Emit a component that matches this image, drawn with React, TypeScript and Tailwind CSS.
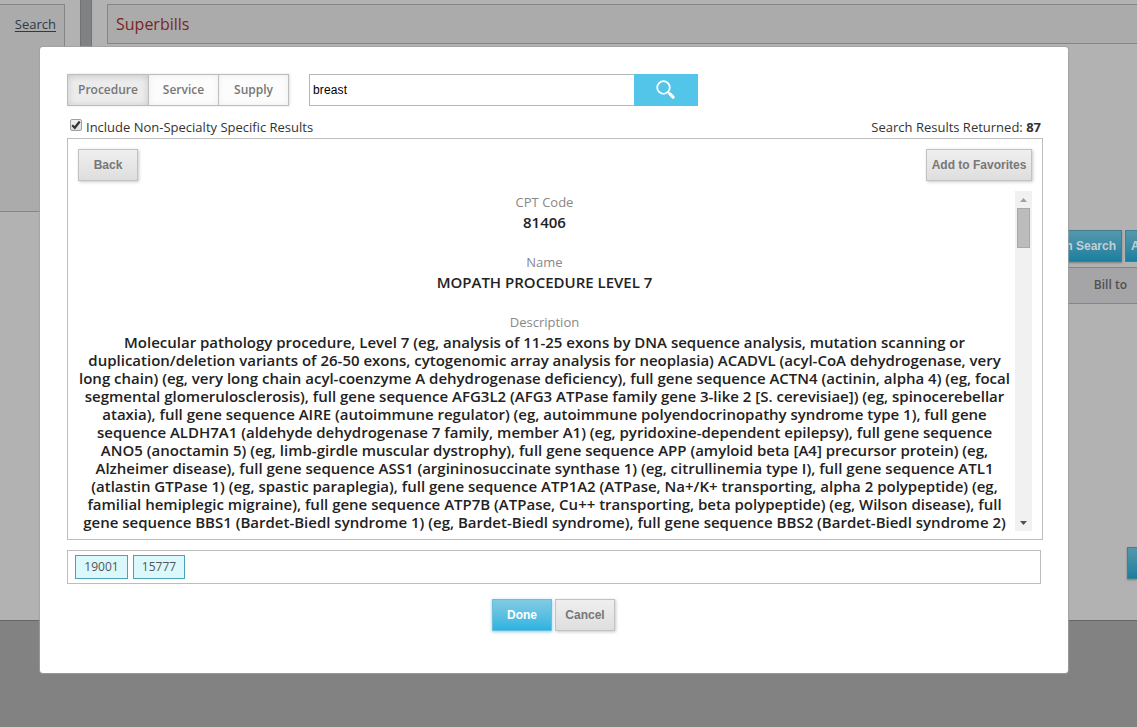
import React from "react";

const description = [
  "Molecular pathology procedure, Level 7 (eg, analysis of 11-25 exons by DNA sequence analysis, mutation scanning or",
  "duplication/deletion variants of 26-50 exons, cytogenomic array analysis for neoplasia) ACADVL (acyl-CoA dehydrogenase, very",
  "long chain) (eg, very long chain acyl-coenzyme A dehydrogenase deficiency), full gene sequence ACTN4 (actinin, alpha 4) (eg, focal",
  "segmental glomerulosclerosis), full gene sequence AFG3L2 (AFG3 ATPase family gene 3-like 2 [S. cerevisiae]) (eg, spinocerebellar",
  "ataxia), full gene sequence AIRE (autoimmune regulator) (eg, autoimmune polyendocrinopathy syndrome type 1), full gene",
  "sequence ALDH7A1 (aldehyde dehydrogenase 7 family, member A1) (eg, pyridoxine-dependent epilepsy), full gene sequence",
  "ANO5 (anoctamin 5) (eg, limb-girdle muscular dystrophy), full gene sequence APP (amyloid beta [A4] precursor protein) (eg,",
  "Alzheimer disease), full gene sequence ASS1 (argininosuccinate synthase 1) (eg, citrullinemia type I), full gene sequence ATL1",
  "(atlastin GTPase 1) (eg, spastic paraplegia), full gene sequence ATP1A2 (ATPase, Na+/K+ transporting, alpha 2 polypeptide) (eg,",
  "familial hemiplegic migraine), full gene sequence ATP7B (ATPase, Cu++ transporting, beta polypeptide) (eg, Wilson disease), full",
  "gene sequence BBS1 (Bardet-Biedl syndrome 1) (eg, Bardet-Biedl syndrome), full gene sequence BBS2 (Bardet-Biedl syndrome 2)",
];

const greyButton =
  "flex h-8 items-center justify-center border border-[#c2c2c2] bg-linear-to-b from-[#efefef] to-[#dedede] font-['Liberation_Sans',sans-serif] text-[12px] font-bold text-[#777] shadow-[1px_1px_3px_rgba(0,0,0,0.22)]";

function Backdrop() {
  return (
    <div className="flex h-full flex-col bg-[#828283]">
      <div className="flex h-[621px] border-b border-[#666] bg-[#b2b2b2]">
        <aside className="w-20 pt-1">
          <div className="flex h-[208px] w-[65px] justify-end border-y border-r border-[#858585] bg-[#ababab] pt-[10px] pr-2 text-[13px] leading-[18px] text-[#2b3b48]">
            <a className="underline underline-offset-2">Search</a>
          </div>
        </aside>
        <div className="w-3 border-x border-[#727375] bg-[#808183]" />
        <main className="flex min-w-0 flex-1 flex-col pt-1">
          <h1 className="ml-[15px] flex h-10 items-center border-y border-l border-[#858585] bg-[#ababab] pl-2 text-base text-[#7c2422]">
            Superbills
          </h1>
          <div className="mt-[186px] flex h-8 justify-end gap-[3px] font-['Liberation_Sans',sans-serif] text-[12px] font-bold text-[#c3cfd4]">
            <div className="flex h-8 w-[110px] items-center justify-end border border-[#437e91] bg-linear-to-b from-[#5497ac] to-[#187f9f] pr-[5px] whitespace-nowrap shadow-[0_1px_2px_rgba(0,0,0,0.3)]">
              Problem Search
            </div>
            <div className="flex h-8 w-3 items-center overflow-hidden border-y border-l border-[#437e91] bg-linear-to-b from-[#5497ac] to-[#187f9f] pl-[5px]">
              A
            </div>
          </div>
          <div className="mt-[5px] flex h-[37px] items-center justify-end border-y border-[#858585] bg-[#a5a5a7] pr-[10px] pb-px text-[12px] font-semibold text-[#505050]">
            Bill to
          </div>
          <div className="mt-[243px] h-8 w-[10px] self-end border border-r-0 border-[#437e91] bg-linear-to-b from-[#5497ac] to-[#187f9f] shadow-[0_1px_2px_rgba(0,0,0,0.3)]" />
        </main>
      </div>
    </div>
  );
}

function Toolbar() {
  return (
    <div className="flex h-8">
      <div className="flex w-[222px] border border-[#bdbdbd] text-[12px] font-semibold text-[#777] shadow-[1px_0_2px_rgba(0,0,0,0.12)]">
        <button className="w-[81px] border-r border-[#bdbdbd] bg-[#ececec] shadow-[inset_0_1px_7px_rgba(0,0,0,0.16)]">Procedure</button>
        <button className="w-[70px] border-r border-[#bdbdbd] bg-[#fcfcfc] shadow-[inset_0_0_7px_rgba(0,0,0,0.06)]">Service</button>
        <button className="flex-1 bg-[#fcfcfc] shadow-[inset_0_0_7px_rgba(0,0,0,0.06)]">Supply</button>
      </div>
      <input
        className="ml-5 w-[325px] border border-r-0 border-[#b5b5b5] bg-white pl-[3px] font-['Liberation_Sans',sans-serif] text-[12px] tracking-[0.15px] text-black outline-none"
        defaultValue="breast"
      />
      <button className="flex w-16 items-center justify-center bg-[#53c5e9]" aria-label="Search">
        <svg width="22" height="22" viewBox="0 0 22 22" fill="none" stroke="white">
          <circle cx="8.5" cy="8.5" r="6.3" strokeWidth="1.8" />
          <path d="M13 13l1.7 1.7" strokeWidth="1.5" />
          <path d="M14.9 14.9l3.2 3.2" strokeWidth="3.2" strokeLinecap="round" />
        </svg>
      </button>
    </div>
  );
}

function Scrollbar() {
  return (
    <div className="flex h-[340px] w-[17px] flex-col items-center bg-[#f1f1f1]">
      <div className="flex h-[17px] items-center">
        <svg width="7" height="4" viewBox="0 0 7 4"><path d="M3.5 0L7 4H0z" fill="#a0a0a0" /></svg>
      </div>
      <div className="h-10 w-[13px] border border-[#a8a8a8] bg-[#bcbcbc]" />
      <div className="mt-auto flex h-[17px] items-center">
        <svg width="7" height="4" viewBox="0 0 7 4"><path d="M0 0h7L3.5 4z" fill="#505050" /></svg>
      </div>
    </div>
  );
}

function Details() {
  return (
    <section className="h-[402px] w-[976px] border border-[#bdbdbd] px-[10px] pt-[10px]">
      <div className="flex justify-between">
        <button className={`${greyButton} w-[60px]`}>Back</button>
        <button className={`${greyButton} w-[106px]`}>Add to Favorites</button>
      </div>
      <div className="mt-[10px] flex h-[340px]">
        <div className="h-[340px] w-[937px] overflow-hidden pr-1 text-center text-[15px] leading-[18px] font-semibold whitespace-nowrap text-[#222]">
          <p className="mt-[2px] text-[13px] font-normal text-[#888]">CPT Code</p>
          <p className="mt-[2px]">81406</p>
          <p className="mt-[22px] text-[13px] font-normal text-[#888]">Name</p>
          <p className="mt-[2px]">MOPATH PROCEDURE LEVEL 7</p>
          <p className="mt-[22px] text-[13px] font-normal text-[#888]">Description</p>
          <div className="mt-[2px] flex flex-col items-center">
            {description.map((line) => (
              <span key={line}>{line}</span>
            ))}
          </div>
        </div>
        <Scrollbar />
      </div>
    </section>
  );
}

export default function App() {
  return (
    <div className="relative h-[727px] w-[1137px] overflow-hidden font-['Open_Sans',sans-serif]">
      <Backdrop />
      <div className="absolute top-[47px] left-10 h-[626px] w-[1028px] rounded-[3px] bg-white pt-[27px] pl-[27px] shadow-[0_0_1px_1px_rgba(160,160,160,0.8)]">
        <Toolbar />
        <div className="flex h-8 w-[974px] items-center justify-between pt-3 text-[13px] text-[#333]">
          <label className="flex items-center">
            <span className="mt-[-6px] mr-1 ml-[3px] flex size-3 items-center justify-center rounded-[2px] border border-[#a0a0a0] bg-linear-to-b from-[#f0f0f0] to-[#dedede]">
              <svg width="10" height="10" viewBox="0 0 10 10" fill="none" stroke="#333" strokeWidth="2.2"><path d="M1.2 5.2l2.6 2.6L8.7 1.5" /></svg>
            </span>
            Include Non-Specialty Specific Results
          </label>
          <span>Search Results Returned: <b>87</b></span>
        </div>
        <Details />
        <div className="mt-[10px] flex h-[34px] w-[974px] gap-[5px] border border-[#bdbdbd] pt-1 pl-[7px] text-[12px] text-[#555]">
          <span className="flex h-6 w-[53px] items-center justify-center border border-[#4aa3b5] bg-[#dbf8fd]">19001</span>
          <span className="flex h-6 w-[52px] items-center justify-center border border-[#4aa3b5] bg-[#dbf8fd]">15777</span>
        </div>
        <div className="mt-[15px] ml-[425px] flex gap-[3px]">
          <button className="h-8 w-[60px] border border-[#6cbfd9] bg-linear-to-b from-[#80cbe1] to-[#27b3e2] font-['Liberation_Sans',sans-serif] text-[12px] font-bold text-white shadow-[0_1px_3px_rgba(39,150,210,0.5)]">Done</button>
          <button className={`${greyButton} w-[60px]`}>Cancel</button>
        </div>
      </div>
    </div>
  );
}
